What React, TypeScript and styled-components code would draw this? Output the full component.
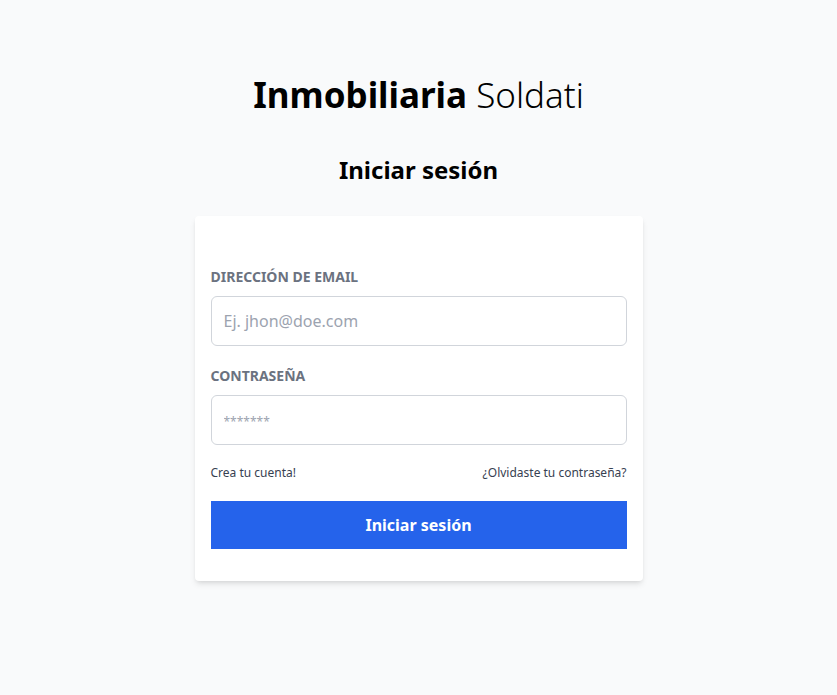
import * as React from 'react';
import styled, { createGlobalStyle } from 'styled-components';

const GlobalStyle = createGlobalStyle`
  * {
    box-sizing: border-box;
  }

  body {
    margin: 0;
    background: #f9fafb;
    font-family: 'Noto Sans', 'Open Sans', sans-serif;
    color: #000000;
  }
`;

const StyledPage = styled.main`
  display: flex;
  flex-direction: column;
  align-items: center;
  padding-top: 75px;
  min-height: 695px;
`;

const StyledTitle = styled.h1`
  margin: 0;
  font-size: 35px;
  line-height: 40px;
  font-weight: 700;
  text-align: center;
`;

const StyledTitleLight = styled.span`
  font-weight: 300;
`;

const StyledSubtitle = styled.h2`
  margin: 39px 0 30px;
  font-size: 24px;
  line-height: 32px;
  font-weight: 700;
  text-align: center;
`;

const StyledCard = styled.form`
  display: flex;
  flex-direction: column;
  width: 448px;
  padding: 51px 16px 32px;
  background: #ffffff;
  border-radius: 4px;
  box-shadow: 0 4px 6px -1px rgba(0, 0, 0, 0.1), 0 2px 4px -2px rgba(0, 0, 0, 0.1);
`;

const StyledField = styled.div`
  display: flex;
  flex-direction: column;
  margin-bottom: 20px;
`;

const StyledLabel = styled.label`
  margin-bottom: 9px;
  font-size: 14px;
  line-height: 20px;
  font-weight: 700;
  color: #6b7280;
  text-transform: uppercase;
`;

interface IInputProps {
  $placeholderSize?: number;
}

const StyledInput = styled.input<IInputProps>`
  width: 100%;
  height: 50px;
  padding: 0 12px;
  border: 1px solid #d1d5db;
  border-radius: 6px;
  font-family: inherit;
  font-size: 16px;
  color: #111827;
  background: #ffffff;

  &::placeholder {
    color: #9ca3af;
    font-size: ${(props) => (props.$placeholderSize ? `${props.$placeholderSize}px` : 'inherit')};
  }
`;

const StyledLinksRow = styled.div`
  display: flex;
  justify-content: space-between;
  margin-bottom: 20px;
  font-size: 12px;
  line-height: 16px;
`;

const StyledLink = styled.a`
  color: #374151;
  text-decoration: none;
`;

const StyledButton = styled.button`
  height: 48px;
  border: none;
  background: #2563eb;
  color: #ffffff;
  font-family: inherit;
  font-size: 16px;
  font-weight: 700;
  cursor: pointer;
`;

const App: React.FC = () => (
  <>
    <GlobalStyle />
    <StyledPage>
      <StyledTitle>
        Inmobiliaria <StyledTitleLight>Soldati</StyledTitleLight>
      </StyledTitle>
      <StyledSubtitle>Iniciar sesión</StyledSubtitle>
      <StyledCard onSubmit={(e) => e.preventDefault()}>
        <StyledField>
          <StyledLabel htmlFor="email">Dirección de email</StyledLabel>
          <StyledInput id="email" type="email" placeholder="Ej. jhon@doe.com" />
        </StyledField>
        <StyledField>
          <StyledLabel htmlFor="password">Contraseña</StyledLabel>
          <StyledInput id="password" type="password" placeholder="*******" $placeholderSize={12} />
        </StyledField>
        <StyledLinksRow>
          <StyledLink href="#">Crea tu cuenta!</StyledLink>
          <StyledLink href="#">¿Olvidaste tu contraseña?</StyledLink>
        </StyledLinksRow>
        <StyledButton type="submit">Iniciar sesión</StyledButton>
      </StyledCard>
    </StyledPage>
  </>
);

export default App;
